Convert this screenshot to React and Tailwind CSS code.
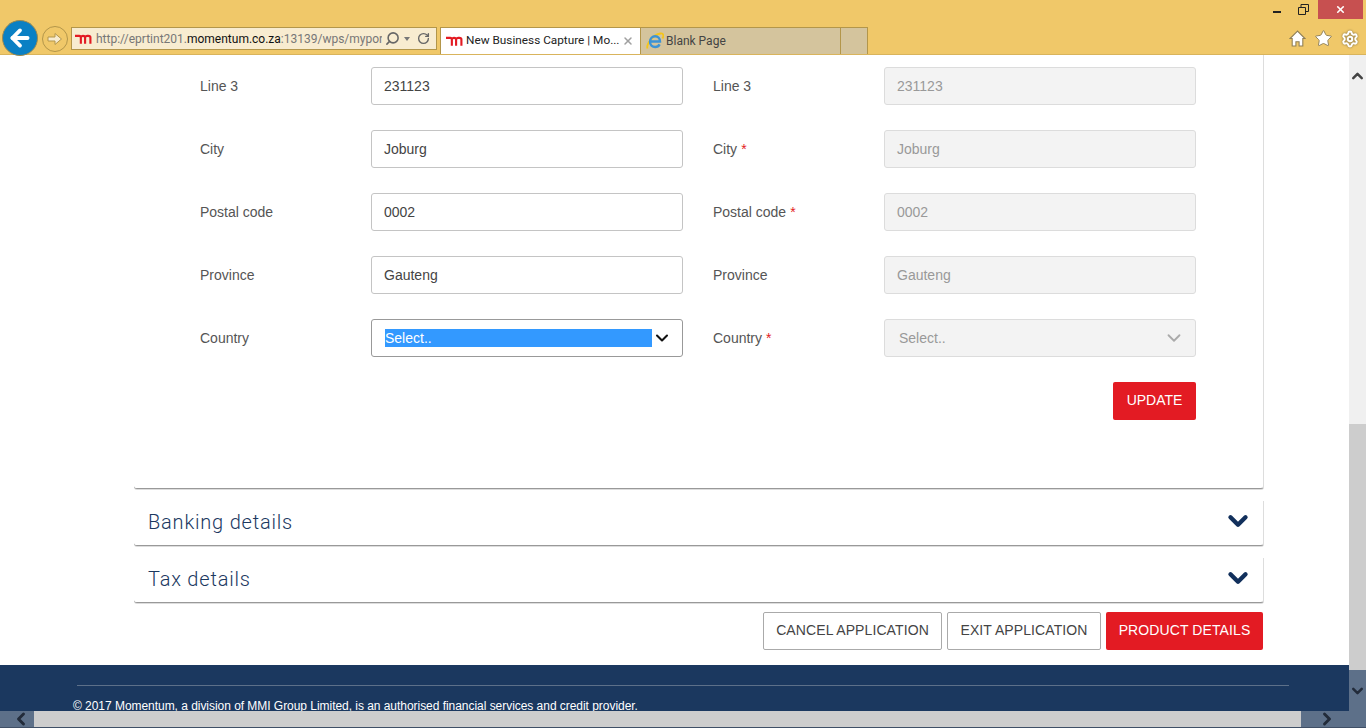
import React from 'react';
import { ChevronDown, ChevronLeft, ChevronRight, ChevronUp, Search, RotateCw, Star, Settings, X, ArrowLeft } from 'lucide-react';

const ROWS = [
    { label: 'Line 3', value: '231123' },
    { label: 'City', value: 'Joburg', required: true },
    { label: 'Postal code', value: '0002', required: true },
    { label: 'Province', value: 'Gauteng' },
];

// Momentum logo
const MomentumLogo = ({ className }) => (
    <svg viewBox="0 0 16 9" className={className} fill="none" stroke="#e31b23" strokeWidth="2">
        <path d="M0 1.500h4c1 0 1.500.6 1.500 1.500v6M5.500 2.500c.5-.7 1-1 2-1s2 .6 2 1.500v6M9.500 2.500c.5-.7 1-1 2-1h1c1.200 0 2 .6 2 1.500v6" />
    </svg>
);

const IeLogo = () => (
    <svg viewBox="0 0 18 18" className="w-[18px] h-[18px] shrink-0 -ml-[1px]">
        <path d="M1.500 16.500C0 13 6 3 14.500 1.500c3-.5 3.500 2 2 5" fill="none" stroke="#f5c518" strokeWidth="1.800" />
        <path d="M4.500 9.500h9.500c0-3-2-5.200-4.800-5.200S4 6.500 4 9.800s2.300 5.200 5.200 5.200c2 0 3.600-1 4.400-2.600" fill="none" stroke="#3b93d6" strokeWidth="2.400" />
    </svg>
);

const Label = ({ text, required }) => (
    <div className="text-[14px] text-[#555]">
        {text}
        {required && <span className="ml-[4px] text-[#e31b23]">*</span>}
    </div>
);

const TextBox = ({ value, disabled }) => (
    <div
        className={`h-[38px] flex items-center px-[12px] rounded-[3px] border text-[14px] ${
            disabled ? 'bg-[#f3f3f3] border-[#dcdcdc] text-[#999]' : 'bg-white border-[#c4c4c4] text-[#444]'
        }`}
    >
        {value}
    </div>
);

const Accordion = ({ title }) => (
    <div className="mt-[12px] h-[45px] pl-[14px] pr-[14px] pb-[5px] flex items-center justify-between bg-white rounded-b-[3px] border-r border-r-[#ddd] border-b border-b-[#999] shadow-[0_1px_0_#ddd]">
        <span className="mt-[2px] text-[20px] tracking-[0.8px] text-[#1b385f] font-['Roboto',sans-serif] font-light">{title}</span>
        <ChevronDown size={30} strokeWidth={3.500} className="-mr-[4px] text-[#12305c]" />
    </div>
);

export default function App() {
    return (
        <div className="w-[1366px] h-[728px] flex flex-col overflow-hidden bg-white font-['Liberation_Sans',Arial,sans-serif]">
            {/* IE toolbar */}
            <div className="h-[55px] shrink-0 flex justify-between bg-[#f0c869] border-b border-b-[#d9b45c]">
                <div className="flex items-end pl-[2px]">
                    <div className="w-[36px] h-[36px] mb-[-2px] rounded-full bg-[#0a80c4] border border-[#9c8a50] flex items-center justify-center">
                        <ArrowLeft size={26} strokeWidth={3.500} className="text-white" />
                    </div>
                    <div className="ml-[4px] mb-[2px] w-[26px] h-[26px] rounded-full border border-[#b3964a] flex items-center justify-center">
                        <svg viewBox="0 0 16 14" className="w-[16px] h-[14px]" fill="#f7ebcf" stroke="#b3964a">
                            <path d="M1 5h7V1.500L14.500 7 8 12.500V9H1z" />
                        </svg>
                    </div>
                    <div className="ml-[3px] mb-[4px] w-[366px] h-[23px] flex items-center bg-[#f8ecd0] border border-[#b3964a] pl-[3px] pr-[4px]">
                        <MomentumLogo className="w-[17px] h-[10px] shrink-0" />
                        <span className="ml-[4px] pt-[1px] w-[286px] overflow-hidden whitespace-nowrap text-[12px] text-[#777] font-['Roboto',sans-serif]">
                            http://eprtint201.<span className="text-[#111]">momentum.co.za</span>:13139/wps/mypor
                        </span>
                        <Search size={15} strokeWidth={2.500} className="ml-[3px] text-[#666] -scale-x-100" />
                        <span className="ml-[4px] w-0 h-0 border-x-[3.500px] border-x-transparent border-t-[4px] border-t-[#777]"></span>
                        <RotateCw size={13} strokeWidth={2.500} className="ml-[7px] text-[#666]" />
                    </div>
                    <div className="ml-[3px] w-[201px] h-[27px] flex items-center bg-white border-t border-x border-[#b3964a] pl-[5px] pr-[6px]">
                        <MomentumLogo className="w-[17px] h-[10px] shrink-0" />
                        <span className="ml-[3px] text-[11.8px] text-[#222] whitespace-nowrap font-['Roboto',sans-serif]">New Business Capture | Mo...</span>
                        <X size={12} strokeWidth={3} className="ml-auto text-[#a0a0a0] shrink-0" />
                    </div>
                    <div className="w-[200px] h-[27px] flex items-center gap-[2px] bg-[#d4c49d] border-t border-r border-[#b3964a] pl-[6px]">
                        <IeLogo />
                        <span className="text-[12px] text-[#444] font-['Roboto',sans-serif]">Blank Page</span>
                    </div>
                    <div className="w-[27px] h-[27px] bg-[#d4c49d] border-t border-r border-[#b3964a]"></div>
                </div>
                <div className="flex flex-col items-end">
                    <div className="flex items-start pr-[3px]">
                        <div className="mt-[11px] w-[8px] h-[2px] bg-[#222]"></div>
                        <svg viewBox="0 0 11 11" className="ml-[17px] mt-[4px] w-[11px] h-[11px]" fill="none" stroke="#222">
                            <path d="M.5 3.500h7v7h-7zM3 3V.5h7.500v7H8" />
                        </svg>
                        <div className="ml-[9px] w-[45px] h-[19px] bg-[#c75050] flex items-center justify-center">
                            <X size={11} strokeWidth={3.500} className="text-white" />
                        </div>
                    </div>
                    <div className="mt-[10px] pr-[7px] flex items-center gap-[8px]">
                        <svg viewBox="0 0 16 16" className="w-[17px] h-[17px]" fill="#fff" stroke="#8f7f55" strokeWidth="1">
                            <path d="M8 1 1 8h2v7h3.500v-4h3v4H13V8h2z" />
                        </svg>
                        <Star size={19} strokeWidth={1.200} fill="#fff" stroke="#8f7f55" />
                        <Settings size={18} strokeWidth={2.600} stroke="#fff" className="drop-shadow-[0_0_1px_#7a6a40]" />
                    </div>
                </div>
            </div>

            <div className="flex-1 min-h-0 flex">
                <div className="w-[1349px] flex flex-col">
                    {/* Page content */}
                    <div className="h-[610px] pl-[134px] pr-[85px]">
                        <div className="pt-[12px] pb-[68px] pl-[66px] pr-[67px] bg-white rounded-b-[3px] border-r border-r-[#ddd] border-b border-b-[#999] shadow-[0_1px_0_#ddd]">
                            <div className="grid grid-cols-[171px_312px_201px_312px] gap-y-[25px]">
                                {ROWS.map(row => (
                                    <React.Fragment key={row.label}>
                                        <div className="self-center"><Label text={row.label} /></div>
                                        <TextBox value={row.value} />
                                        <div className="self-center pl-[30px]"><Label text={row.label} required={row.required} /></div>
                                        <TextBox value={row.value} disabled />
                                    </React.Fragment>
                                ))}
                                <div className="self-center"><Label text="Country" /></div>
                                <div className="h-[38px] flex items-center pl-[13px] bg-white border border-[#999] rounded-[3px]">
                                    <div className="w-[267px] shrink-0 h-[18px] flex items-center bg-[#3399ff] text-white text-[14px]">Select..</div>
                                    <ChevronDown size={20} strokeWidth={2.500} className="text-[#111]" />
                                </div>
                                <div className="self-center pl-[30px]"><Label text="Country" required /></div>
                                <div className="h-[38px] flex items-center justify-between pl-[14px] pr-[10px] bg-[#f3f3f3] border border-[#dcdcdc] rounded-[3px] text-[14px] text-[#999]">
                                    Select..
                                    <ChevronDown size={22} strokeWidth={2} className="text-[#aaa]" />
                                </div>
                            </div>
                            <div className="mt-[25px] flex justify-end">
                                <button className="h-[38px] w-[83px] pb-[1px] rounded-[2px] bg-[#e31b23] text-white text-[14px]">UPDATE</button>
                            </div>
                        </div>

                        <Accordion title="Banking details" />
                        <Accordion title="Tax details" />

                        <div className="mt-[9px] mr-[1px] flex justify-end gap-[5px] tracking-[0.1px]">
                            <button className="h-[38px] w-[179px] pb-[2px] rounded-[2px] bg-white border border-[#aaa] text-[#444] text-[14px]">CANCEL APPLICATION</button>
                            <button className="h-[38px] w-[154px] pb-[2px] rounded-[2px] bg-white border border-[#aaa] text-[#444] text-[14px]">EXIT APPLICATION</button>
                            <button className="h-[38px] w-[157px] pb-[2px] rounded-[2px] bg-[#e31b23] text-white text-[14px]">PRODUCT DETAILS</button>
                        </div>
                    </div>

                    {/* Footer */}
                    <div className="h-[46px] overflow-hidden bg-[#1b385f] pt-[20px] pl-[73px] pr-[60px]">
                        <div className="ml-[4px] border-t border-t-[#5d7089]"></div>
                        <p className="mt-[13px] text-[12px] leading-[14px] tracking-[-0.04px] text-white whitespace-nowrap">
                            © 2017 Momentum, a division of MMI Group Limited, is an authorised financial services and credit provider.
                        </p>
                    </div>
                </div>

                {/* Vertical scrollbar */}
                <div className="w-[17px] flex flex-col bg-[#5d7089]">
                    <div className="h-[369px] bg-[#f0f0f0] pt-[12px] flex justify-center">
                        <ChevronUp size={18} strokeWidth={3.500} className="text-[#444]" />
                    </div>
                    <div className="h-[246px] bg-[#cdcdcd]"></div>
                    <div className="flex-1 flex items-center justify-center">
                        <ChevronDown size={18} strokeWidth={3.500} className="text-[#222b3a]" />
                    </div>
                </div>
            </div>

            {/* Horizontal scrollbar */}
            <div className="h-[17px] shrink-0 flex bg-[#5d7089] border-b border-b-[#3f4f66]">
                <div className="w-[34px] pl-[8px] flex items-center justify-center">
                    <ChevronLeft size={20} strokeWidth={3.500} className="text-[#222b3a]" />
                </div>
                <div className="w-[1267px] bg-[#cdcdcd]"></div>
                <div className="flex-1 flex items-center pl-[16px]">
                    <ChevronRight size={20} strokeWidth={3.500} className="text-[#222b3a]" />
                </div>
            </div>
        </div>
    );
}
